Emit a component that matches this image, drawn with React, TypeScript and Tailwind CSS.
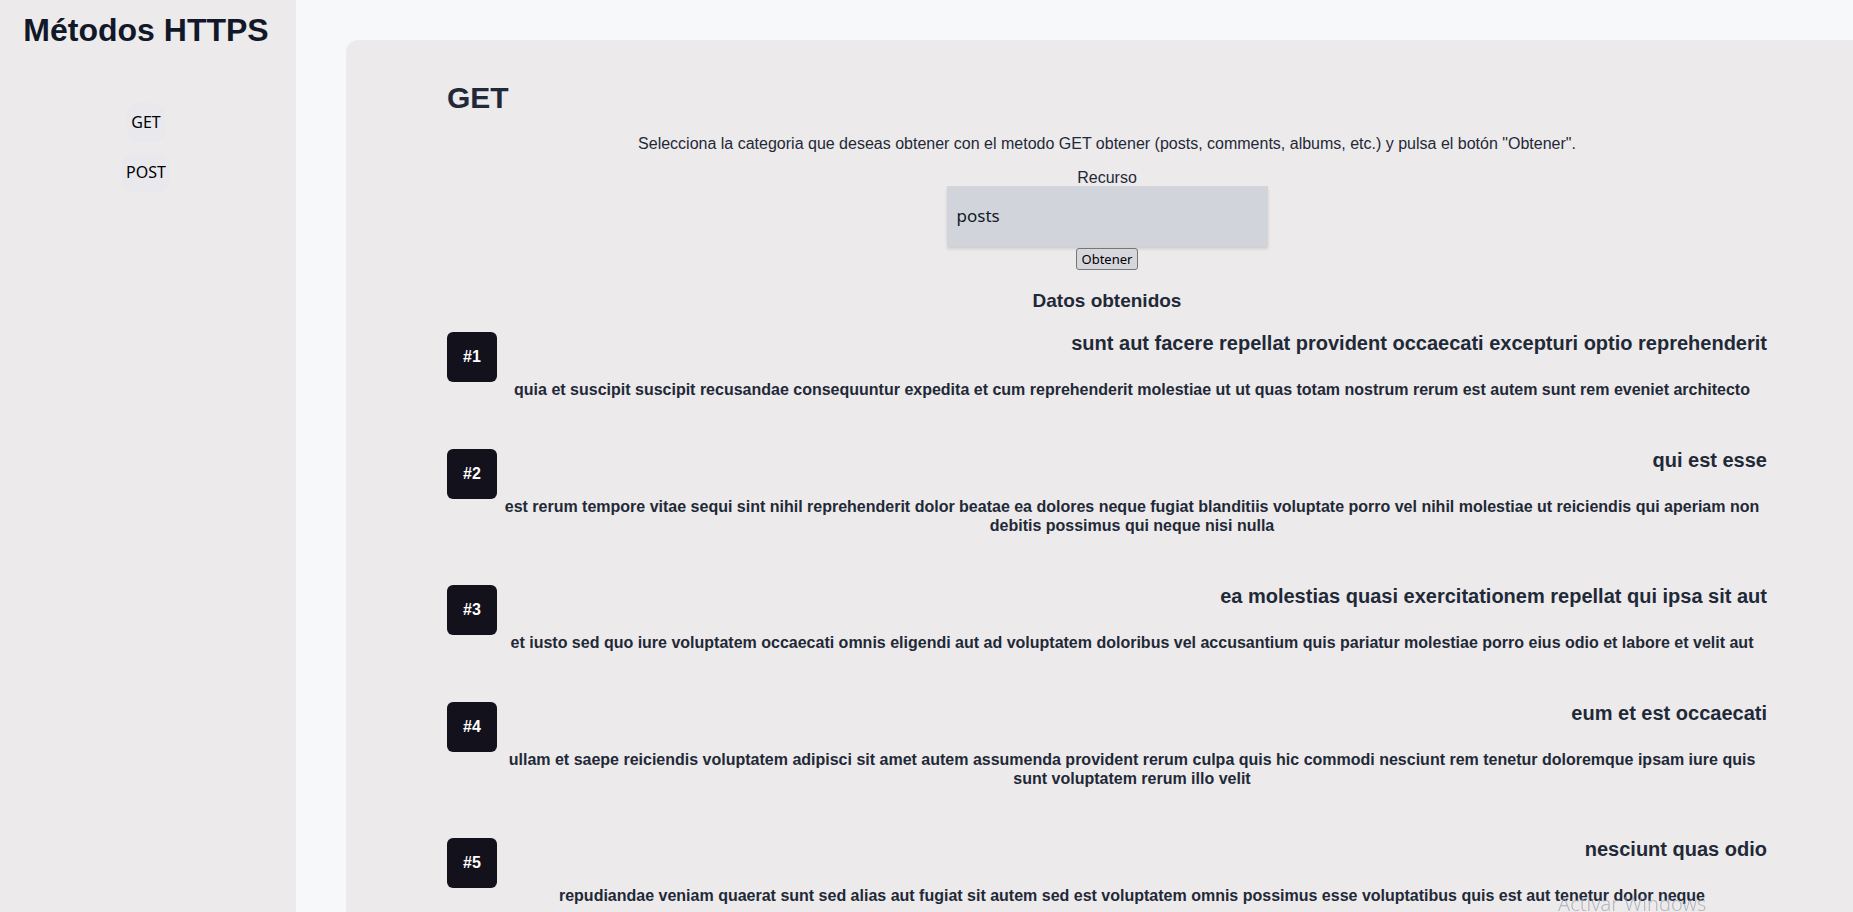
import React from 'react';

type Post = { id: number; title: string; body: string };

const posts: Post[] = [
    {
        id: 1,
        title: 'sunt aut facere repellat provident occaecati excepturi optio reprehenderit',
        body: 'quia et suscipit suscipit recusandae consequuntur expedita et cum reprehenderit molestiae ut ut quas totam nostrum rerum est autem sunt rem eveniet architecto',
    },
    {
        id: 2,
        title: 'qui est esse',
        body: 'est rerum tempore vitae sequi sint nihil reprehenderit dolor beatae ea dolores neque fugiat blanditiis voluptate porro vel nihil molestiae ut reiciendis qui aperiam non debitis possimus qui neque nisi nulla',
    },
    {
        id: 3,
        title: 'ea molestias quasi exercitationem repellat qui ipsa sit aut',
        body: 'et iusto sed quo iure voluptatem occaecati omnis eligendi aut ad voluptatem doloribus vel accusantium quis pariatur molestiae porro eius odio et labore et velit aut',
    },
    {
        id: 4,
        title: 'eum et est occaecati',
        body: 'ullam et saepe reiciendis voluptatem adipisci sit amet autem assumenda provident rerum culpa quis hic commodi nesciunt rem tenetur doloremque ipsam iure quis sunt voluptatem rerum illo velit',
    },
    {
        id: 5,
        title: 'nesciunt quas odio',
        body: 'repudiandae veniam quaerat sunt sed alias aut fugiat sit autem sed est voluptatem omnis possimus esse voluptatibus quis est aut tenetur dolor neque',
    },
    {
        id: 6,
        title: 'dolorem eum magni eos aperiam quia',
        body: 'ut aspernatur corporis harum nihil quis provident sequi mollitia nobis aliquid molestiae perspiciatis et ea nemo ab reprehenderit accusantium quas voluptate dolores velit et doloremque molestiae',
    },
];

const PostItem: React.FC<{ post: Post }> = ({ post }) => (
    <div className="flex items-start">
        <div className="flex h-[50px] w-[50px] shrink-0 items-center justify-center rounded-md bg-[#13111c] text-[16px] font-bold text-white">
            #{post.id}
        </div>
        <div className="flex-1">
            <h2 className="text-right text-[20px] font-bold leading-[22px] text-[#1f2937]">{post.title}</h2>
            <p className="mt-[26px] text-center text-[16px] font-bold leading-[19px] text-[#1f2937]">{post.body}</p>
        </div>
    </div>
);

export default function App() {
    return (
        <div className="flex min-h-screen bg-[#f7f8fa] font-['Liberation_Sans',Arial,sans-serif]">
            {/* Sidebar */}
            <aside className="flex w-[296px] shrink-0 flex-col items-center bg-[#eceaeb] pr-1">
                <h1 className="mt-3 text-[32px] font-bold leading-[37px] text-[#111827]">Métodos HTTPS</h1>
                <nav className="mt-[54px] flex flex-col items-center gap-[11px] font-['Noto_Sans',sans-serif] text-[16px] text-black">
                    <a className="rounded-xl bg-[#e8e8ed] px-1 py-2 leading-[23px]">GET</a>
                    <a className="rounded-xl bg-[#e8e8ed] px-1 py-2 leading-[23px]">POST</a>
                </nav>
            </aside>

            {/* Main */}
            <main className="min-w-0 flex-1 pl-[50px] pt-10">
                <section className="rounded-tl-xl bg-[#eceaeb] pb-12 pl-[101px] pr-[86px] pt-10 text-[#1f2937]">
                    <h2 className="text-3xl font-bold leading-9">GET</h2>
                    <p className="mt-4 text-center text-base leading-6 text-[#1f2937]">
                        Selecciona la categoria que deseas obtener con el metodo GET obtener (posts, comments, albums, etc.) y pulsa el botón "Obtener".
                    </p>

                    <div className="mt-[13px] flex flex-col items-center">
                        <label className="leading-[17px]">Recurso</label>
                        <select
                            defaultValue="posts"
                            className="h-[60px] w-[321px] appearance-none bg-[#d1d5db] pl-[10px] font-['Noto_Sans',sans-serif] text-[17px] text-[#111827] shadow-[0_3px_3px_rgba(0,0,0,0.12)] outline-none"
                        >
                            <option value="posts">posts</option>
                            <option value="comments">comments</option>
                            <option value="albums">albums</option>
                            <option value="photos">photos</option>
                            <option value="todos">todos</option>
                            <option value="users">users</option>
                        </select>
                        <button className="mt-[2px] h-[22px] rounded-[3px] border border-[#767676] bg-[#d6d7dd] px-[5px] font-['Noto_Sans',sans-serif] text-[13px] leading-none text-black">
                            Obtener
                        </button>
                        <h3 className="mt-5 text-[19px] font-bold leading-[22px]">Datos obtenidos</h3>
                    </div>

                    <div className="mt-5 flex flex-col gap-[50px]">
                        {posts.map((p) => (
                            <PostItem key={p.id} post={p} />
                        ))}
                    </div>
                </section>
            </main>

            {/* Windows watermark */}
            <div className="pointer-events-none fixed left-[1558px] top-[894px] font-['Noto_Sans',sans-serif] text-[20px] font-light leading-none text-[#9ca3af]/70">
                Activar Windows
            </div>
        </div>
    );
}
